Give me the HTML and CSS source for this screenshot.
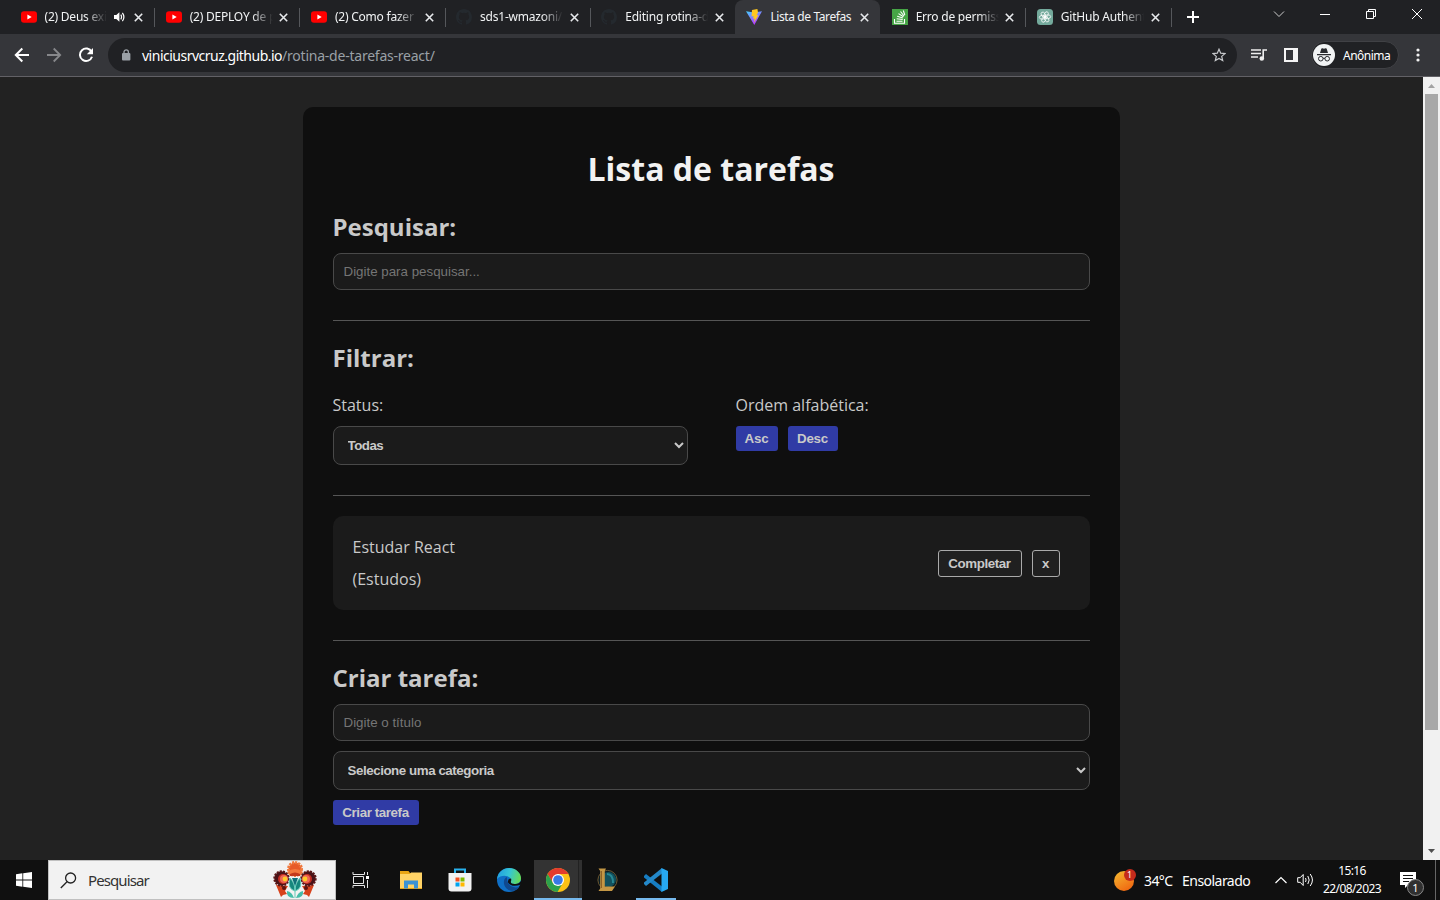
FILE: index.html
```html
<!DOCTYPE html>
<html lang="pt-BR">
<head>
<meta charset="utf-8">
<title>Lista de Tarefas</title>
<link rel="stylesheet" href="styles.css">
</head>
<body>
<svg class="defs" width="0" height="0">
  <defs>
    <symbol id="youtube" viewBox="0 0 16 16"><rect x="0" y="2.2" width="16" height="11.6" rx="3" fill="#f00"/><path d="M6.4 5.5v5l4.3-2.5z" fill="#fff"/></symbol>
    <symbol id="github" viewBox="0 0 16 16"><path fill="#24292e" d="M8 0C3.58 0 0 3.58 0 8c0 3.54 2.29 6.53 5.47 7.59.4.07.55-.17.55-.38 0-.19-.01-.82-.01-1.49-2.01.37-2.53-.49-2.69-.94-.09-.23-.48-.94-.82-1.13-.28-.15-.68-.52-.01-.53.63-.01 1.08.58 1.23.82.72 1.21 1.87.87 2.33.66.07-.52.28-.87.51-1.07-1.78-.2-3.64-.89-3.64-3.95 0-.87.31-1.59.82-2.15-.08-.2-.36-1.02.08-2.12 0 0 .67-.21 2.2.82a7.6 7.6 0 0 1 4 0c1.53-1.04 2.2-.82 2.2-.82.44 1.1.16 1.92.08 2.12.51.56.82 1.27.82 2.15 0 3.07-1.87 3.75-3.65 3.95.29.25.54.73.54 1.48 0 1.07-.01 1.93-.01 2.2 0 .21.15.46.55.38A8.01 8.01 0 0 0 16 8c0-4.42-3.58-8-8-8z"/></symbol>
    <symbol id="close" viewBox="0 0 9 9"><path d="M.8.8l7.4 7.4M8.2.8L.8 8.2" stroke="#e8eaed" stroke-width="1.6" fill="none"/></symbol>
  </defs>
</svg>

<header class="tabs">
  <div class="tab"><svg class="fav"><use href="#youtube"/></svg><span class="label short">(2) Deus exi</span>
    <svg class="sound" viewBox="0 0 11 10"><path d="M0 3h2.3L5.4.2v9.6L2.3 7H0z" fill="#fff"/><path d="M6.8 2.6q1.5 2.4 0 4.8M8.4.8q3 4.2 0 8.4" stroke="#fff" stroke-width="1.2" fill="none"/></svg>
    <svg class="x"><use href="#close"/></svg></div>
  <div class="tab"><svg class="fav"><use href="#youtube"/></svg><span class="label">(2) DEPLOY de p</span><svg class="x"><use href="#close"/></svg></div>
  <div class="tab"><svg class="fav"><use href="#youtube"/></svg><span class="label">(2) Como fazer</span><svg class="x"><use href="#close"/></svg></div>
  <div class="tab"><svg class="fav"><use href="#github"/></svg><span class="label">sds1-wmazoni/l</span><svg class="x"><use href="#close"/></svg></div>
  <div class="tab before-active"><svg class="fav"><use href="#github"/></svg><span class="label">Editing rotina-d</span><svg class="x"><use href="#close"/></svg></div>
  <div class="tab active">
    <svg class="fav" viewBox="0 0 16 16"><defs><linearGradient id="vg" x1="0" y1="0" x2=".5" y2="1"><stop offset="0" stop-color="#41d1ff"/><stop offset="1" stop-color="#bd34fe"/></linearGradient></defs><path d="M0 2.2l8 1.4 8-1.4L8.3 16z" fill="url(#vg)"/><path d="M11.4 0L6 1l-.4 6.4 2-.4-.5 2.8 1.6-.4-.7 4.2L12.6 6l-2 .3L12 3.6z" fill="#ffc820"/></svg>
    <span class="label full">Lista de Tarefas</span><svg class="x"><use href="#close"/></svg></div>
  <div class="tab"><svg class="fav" viewBox="0 0 16 16"><path fill="#46a546" d="M0 0h16v16H0z"/><path d="M2.5 10v4.3h10V10M4.5 12.2h6M4.7 9.8l6 .7M5.2 7.2l5.7 1.8M6.5 4.6l4.9 3.2M8.5 2.5l3.6 4.5M11.3 1.5l1.5 4.5" stroke="#fff" stroke-width="1.1" fill="none"/></svg><span class="label">Erro de permiss</span><svg class="x"><use href="#close"/></svg></div>
  <div class="tab"><svg class="fav" viewBox="0 0 16 16"><rect width="16" height="16" rx="3.5" fill="#74aa9c"/><g fill="none" stroke="#fff" stroke-width=".75"><ellipse cx="8" cy="5.4" rx="1.9" ry="3.1" transform="rotate(25 8 8)"/><ellipse cx="8" cy="5.4" rx="1.9" ry="3.1" transform="rotate(85 8 8)"/><ellipse cx="8" cy="5.4" rx="1.9" ry="3.1" transform="rotate(145 8 8)"/><ellipse cx="8" cy="5.4" rx="1.9" ry="3.1" transform="rotate(205 8 8)"/><ellipse cx="8" cy="5.4" rx="1.9" ry="3.1" transform="rotate(265 8 8)"/><ellipse cx="8" cy="5.4" rx="1.9" ry="3.1" transform="rotate(325 8 8)"/></g></svg><span class="label">GitHub Authent</span><svg class="x"><use href="#close"/></svg></div>
  <svg class="plus" viewBox="0 0 12 12"><path d="M6 0v12M0 6h12" stroke="#fff" stroke-width="2"/></svg>
  <div class="window-controls">
    <svg width="12" height="12" viewBox="0 0 12 12"><path d="M1 3.5l5 5 5-5" stroke="#ccc" fill="none"/></svg>
    <svg width="12" height="12" viewBox="0 0 12 12"><path d="M1 6.5h10" stroke="#fff"/></svg>
    <svg width="12" height="12" viewBox="0 0 12 12"><path d="M1.5 3.5h7v7h-7zM3.5 3.5v-2h7v7h-2" stroke="#fff" fill="none"/></svg>
    <svg width="12" height="12" viewBox="0 0 12 12"><path d="M1 1l10 10M11 1L1 11" stroke="#fff"/></svg>
  </div>
</header>

<nav class="toolbar">
  <div class="nav-icons">
    <svg width="16" height="16" viewBox="0 0 16 16"><path d="M15 8H2M8.3 1.5L1.8 8l6.5 6.5" stroke="#fff" stroke-width="2" fill="none"/></svg>
    <svg width="16" height="16" viewBox="0 0 16 16"><path d="M1 8h13M7.7 1.5L14.2 8l-6.5 6.5" stroke="#86878a" stroke-width="1.8" fill="none"/></svg>
    <svg width="16" height="16" viewBox="0 0 16 16"><path d="M13.6 4.8A6.2 6.2 0 1 0 14 9.7" stroke="#fff" stroke-width="2" fill="none"/><path d="M15 1v6.3H8.8z" fill="#fff"/></svg>
  </div>
  <div class="address">
    <svg width="10" height="12" viewBox="0 0 10 12"><rect x="1" y="4" width="8.4" height="7.6" rx="1" fill="#9aa0a6"/><path d="M3 4.5V3a2.2 2.2 0 0 1 4.4 0v1.5" stroke="#9aa0a6" stroke-width="1.3" fill="none"/></svg>
    <span class="url"><b>viniciusrvcruz.github.io</b>/rotina-de-tarefas-react/</span>
    <svg class="star" width="14" height="14" viewBox="0 0 14 14"><path d="M7 1.2l1.7 4 4.3.4-3.3 2.8 1 4.2L7 10.4l-3.7 2.2 1-4.2L1 5.6l4.3-.4z" stroke="#c7c9cc" stroke-width="1.2" fill="none"/></svg>
  </div>
  <svg class="playlist" width="16" height="14" viewBox="0 0 16 14"><path d="M0 2h10M0 5.5h10M0 9h7" stroke="#eee" stroke-width="1.6"/><path d="M12.2 10V2H16" stroke="#eee" stroke-width="1.6" fill="none"/><circle cx="10.8" cy="10.5" r="2.3" fill="#eee"/></svg>
  <svg class="panel" width="14" height="14" viewBox="0 0 14 14"><path d="M0 0h14v14H0zM2 2v10h7V2z" fill="#f5f5f5" fill-rule="evenodd"/></svg>
  <div class="profile">
    <svg width="22" height="22" viewBox="0 0 22 22"><circle cx="11" cy="11" r="11" fill="#f1f3f4"/><path d="M4 10h14v1.2H4zM7 9l1.3-4.2q.3-.8 1.2-.5l1.5.4 1.5-.4q.9-.3 1.2.5L15 9z" fill="#292b2f"/><circle cx="7.8" cy="14.7" r="2.3" stroke="#292b2f" fill="none"/><circle cx="14.2" cy="14.7" r="2.3" stroke="#292b2f" fill="none"/><path d="M10 14.5q1-.7 2 0" stroke="#292b2f" fill="none"/></svg>
    <span>Anônima</span>
  </div>
  <svg class="dots" width="4" height="14" viewBox="0 0 4 14"><g fill="#f1f1f1"><circle cx="2" cy="2" r="1.6"/><circle cx="2" cy="7" r="1.6"/><circle cx="2" cy="12" r="1.6"/></g></svg>
</nav>

<div class="viewport">
  <main class="page">
    <div class="app">
      <h1>Lista de tarefas</h1>
      <section class="search">
        <h2>Pesquisar:</h2>
        <input type="text" placeholder="Digite para pesquisar...">
      </section>
      <section class="filter">
        <h2>Filtrar:</h2>
        <div class="filter-options">
          <div class="status"><p>Status:</p><select><option>Todas</option></select></div>
          <div class="order"><p>Ordem alfabética:</p><div class="order-buttons"><button class="asc">Asc</button><button class="desc">Desc</button></div></div>
        </div>
      </section>
      <section class="todo-list">
        <div class="todo">
          <div class="todo-text"><p>Estudar React</p><p>(Estudos)</p></div>
          <div class="todo-actions"><button class="complete">Completar</button><button class="remove">x</button></div>
        </div>
      </section>
      <section class="form">
        <h2>Criar tarefa:</h2>
        <input type="text" placeholder="Digite o título">
        <select class="category"><option>Selecione uma categoria</option></select>
        <button class="create">Criar tarefa</button>
      </section>
    </div>
  </main>
  <div class="scrollbar">
    <svg width="17" height="17" viewBox="0 0 17 17"><path d="M5 11h7L8.5 7z" fill="#a3a3a3"/></svg>
    <div class="thumb"></div>
    <svg width="17" height="17" viewBox="0 0 17 17"><path d="M5 6h7l-3.5 4z" fill="#505050"/></svg>
  </div>
</div>

<footer class="taskbar">
  <div class="start"><svg width="16" height="16" viewBox="0 0 16 16"><path d="M0 2.2L6.4 1.3v6.3H0zM7.2 1.2L16 0v7.6H7.2zM0 8.4h6.4v6.3L0 13.8zM7.2 8.4H16V16l-8.8-1.2z" fill="#fff"/></svg></div>
  <div class="searchbox">
    <svg width="17" height="17" viewBox="0 0 17 17"><circle cx="10.6" cy="6" r="5" stroke="#222" stroke-width="1.3" fill="none"/><path d="M7 9.7L.8 16" stroke="#222" stroke-width="1.3"/></svg>
    <span>Pesquisar</span>
    <svg class="flower" width="44" height="38" viewBox="0 0 44 38">
      <path d="M3 24l12 1-3 5 2 3-4 1-2 2zM41 24l-12 1 3 5-2 3 4 1 2 2z" fill="#d8431c"/><circle cx="11" cy="27" r="2" fill="#5b1511"/><circle cx="33" cy="27" r="2" fill="#5b1511"/>
      <circle cx="22" cy="8" r="6.5" fill="#e75a28" stroke="#f07a3e" stroke-width="3" stroke-dasharray="2 1"/><path d="M14 11q8-6 16 0l-3 4H17z" fill="#f4793d"/><path d="M17 13q5-3 10 0v2H17z" fill="#c43a1b"/>
      <g><circle cx="8.5" cy="17.5" r="7.2" fill="#481318" stroke="#5c1818" stroke-width="2" stroke-dasharray="2 1.2"/><circle cx="10" cy="18" r="5" fill="#c52d22"/><circle cx="11" cy="18" r="4" fill="#ee6a55"/><circle cx="12" cy="18" r="2.4" fill="#ffc928"/></g>
      <g><circle cx="35.5" cy="17.5" r="7.2" fill="#481318" stroke="#5c1818" stroke-width="2" stroke-dasharray="2 1.2"/><circle cx="34" cy="18" r="5" fill="#c52d22"/><circle cx="33" cy="18" r="4" fill="#ee6a55"/><circle cx="32" cy="18" r="2.4" fill="#ffc928"/></g>
      <path d="M22 37V17M22 30Q14 28 17 17q5 5 5 13Q22 22 27 17q3 11-5 13z" fill="#17877d" stroke="#65cbb9"/><path d="M21 37q-8 0-7-7 5 1 7 7zM23 37q8 0 7-7-5 1-7 7z" fill="#45bda9"/><path d="M19 17h6l-3 8z" fill="#117078"/>
    </svg>
  </div>
  <div class="task view"><svg width="18" height="16" viewBox="0 0 18 16"><path d="M1.5 4.5h10v7h-10zM1 0v2.5h11.5V0M1 16v-2.5h11.5V16M15.5 0v3M15.5 8v8" stroke="#e6e6e6" fill="none"/><path d="M14 4h3v3h-3z" fill="#fff"/></svg></div>
  <div class="task explorer"><svg width="22" height="20" viewBox="0 0 22 20"><path d="M0 1h8.500l1.500 2H22v16H0z" fill="#e9a515"/><path d="M0 4h10l1-1.500h11V18H0z" fill="#ffd366"/><path d="M4 18.500v-8h14v8h-4v-4H8v4z" fill="#3b92d4"/></svg></div>
  <div class="task"><svg width="24" height="24" viewBox="0 0 24 24"><path d="M7 6V1.500h10V6" stroke="#28b2ee" stroke-width="2" fill="none"/><path d="M.5 5h23v15.500q0 3-3 3h-17q-3 0-3-3z" fill="#f2f2f2"/><path d="M7.500 9.500h4v4h-4z" fill="#f25022"/><path d="M12.500 9.500h4v4h-4z" fill="#7fba00"/><path d="M7.500 14.500h4v4h-4z" fill="#00a4ef"/><path d="M12.500 14.500h4v4h-4z" fill="#ffb900"/></svg></div>
  <div class="task"><svg width="24" height="24" viewBox="0 0 24 24"><defs><linearGradient id="eg" x1="0" y1=".3" x2="1" y2=".5"><stop stop-color="#219fe0"/><stop offset=".5" stop-color="#35c5d6"/><stop offset="1" stop-color="#66dc55"/></linearGradient></defs><circle cx="12" cy="12" r="12" fill="#0f6fc6"/><path d="M0 11C1 4 6 0 12 0c7 0 12 5 12 10 0 4-3 6-6.500 6-3 0-4.500-1-3.500-3 1-5-9-8-14-2z" fill="url(#eg)"/><path d="M10 9c-5 2-4 11 3 13.500 4 1 8-.5 9.500-4-5 2.500-13 0-12.500-9.500z" fill="#10498f"/><path d="M14 10.500q-3.500 0-3 4 4 5.500 13 2V13q-2 3.300-6.500 3c-3 0-4.200-1-3.500-3q.5-1.500 0-2.500z" fill="#101010"/></svg></div>
  <div class="task chrome"><svg width="24" height="24" viewBox="0 0 24 24"><circle cx="12" cy="12" r="12" fill="#fbc116"/><path d="M1.600 6A12 12 0 0 1 22.400 6H12L6.500 14.500z" fill="#e33b2e"/><path d="M1.600 6A12 12 0 0 0 11.500 24l5.300-9L12 17.500 7 15z" fill="#2da14c"/><circle cx="12" cy="12" r="6" fill="#fff"/><circle cx="12" cy="12" r="4.800" fill="#3779e6"/></svg></div>
  <div class="task"><svg width="22" height="24" viewBox="0 0 22 24"><circle cx="11.500" cy="12" r="9.600" fill="#0a1c22" stroke="#6d5832" stroke-width="1"/><circle cx="12.500" cy="11.500" r="7.500" fill="#12515d"/><path d="M11 6q6 0 6 9" stroke="#278893" stroke-width="2" fill="none"/><path d="M2.500.5H10L8.800 3v15.500H19l-3 4.500H2.500l1.700-2.500V3z" fill="#c49745"/><path d="M5.500 3v17" stroke="#8e6227" stroke-width="1"/></svg></div>
  <div class="task code"><svg width="24" height="24" viewBox="0 0 24 24"><path d="M0 8l2-2 16 12.500V24L0 9.500z" fill="#167dc2"/><path d="M0 16l2 2L18 5.500V0L0 14.500z" fill="#2489ca"/><path d="M17.500 0L24 3v18l-6.500 3z" fill="#27a9f3"/></svg></div>
  <div class="tray">
    <div class="weather"><svg width="22" height="22" viewBox="0 0 22 22"><defs><linearGradient id="sun" x2=".6" y2="1"><stop stop-color="#f5bb31"/><stop offset="1" stop-color="#f06a12"/></linearGradient></defs><circle cx="10" cy="12" r="10" fill="url(#sun)"/><circle cx="16" cy="6" r="6" fill="#c42b1c"/></svg><span class="count">1</span></div>
    <span class="temp">34°C</span><span class="sky">Ensolarado</span>
    <svg class="chev" width="12" height="8" viewBox="0 0 12 8"><path d="M.5 7L6 1.500 11.500 7" stroke="#fff" stroke-width="1.200" fill="none"/></svg>
    <svg class="vol" width="17" height="14" viewBox="0 0 17 14"><path d="M.7 4.700h2.500l3-3.200v11l-3-3.200H.7zM8.500 5q1.200 2 0 4M10.800 3q2.800 4 0 8M13.200 1q4.500 6 0 12" stroke="#fff" fill="none"/></svg>
    <div class="clock"><span>15:16</span><span>22/08/2023</span></div>
    <div class="notify"><svg width="16" height="16" viewBox="0 0 16 16"><path d="M0 0h16v13H8l-3 3v-3H0z" fill="#fff"/><path d="M3 3.500h10M3 6.500h10M3 9.500h6" stroke="#111"/></svg><span class="badge">1</span></div>
    <div class="peek"></div>
  </div>
</footer>
</body>
</html>
```

FILE: styles.css
```css
* { box-sizing: border-box; margin: 0; padding: 0; }
body { width: 1440px; height: 900px; overflow: hidden; display: flex; flex-direction: column; background: #222; font-family: "Open Sans", sans-serif; }
svg { display: block; flex: none; }
.defs { position: absolute; }

/* tab strip */
.tabs { height: 34px; flex: none; background: #202124; display: flex; align-items: stretch; padding-left: 9px; color: #f1f3f4; font: 12px "Noto Sans", sans-serif; letter-spacing: -.22px; }
.tab { position: relative; width: 145.2px; flex: none; display: flex; align-items: center; padding: 0 12px 0 11.500px; }
.tab::after { content: ""; position: absolute; right: -1px; top: 8px; width: 1px; height: 19px; background: #55575b; }
.tab.active::after, .tab.before-active::after { display: none; }
.fav { width: 16px; height: 16px; }
.label { width: 92px; margin: 0 -7px 0 8px; white-space: nowrap; line-height: 18px; -webkit-mask-image: linear-gradient(90deg, #000 62px, transparent 83px); mask-image: linear-gradient(90deg, #000 62px, transparent 83px); }
.label.short { width: 72px; margin-right: -10px; -webkit-mask-image: linear-gradient(90deg, #000 40px, transparent 62px); mask-image: linear-gradient(90deg, #000 40px, transparent 62px); }
.label.full { letter-spacing: -.4px; -webkit-mask-image: none; mask-image: none; }
.sound { width: 11px; height: 10px; margin-left: 7px; }
.x { width: 9px; height: 9px; margin-left: auto; margin-right: -1px; }
.active { background: #35363a; border-radius: 8px 8px 0 0; }
.plus { width: 12px; height: 12px; align-self: center; margin-left: 16px; }
.window-controls { margin-left: auto; display: flex; gap: 34px; padding: 8px 17px 0 0; }

/* toolbar */
.toolbar { height: 43px; flex: none; background: #35363a; border-bottom: 1px solid #626166; display: flex; align-items: center; color: #fff; }
.nav-icons { display: flex; gap: 16px; margin-left: 14px; }
.address { width: 1129px; height: 34px; margin-left: 14px; border-radius: 17px; background: #202124; display: flex; align-items: center; padding: 0 11px 0 13px; }
.url { margin-left: 11px; font: 14px "Noto Sans", sans-serif; color: #9aa0a6; letter-spacing: -.23px; }
.url b { font-weight: 400; color: #fff; letter-spacing: -.5px; }
.star { margin-left: auto; }
.playlist { margin-left: 14px; }
.panel { margin-left: 17px; }
.profile { width: 88px; height: 28px; margin-left: 13px; border: 1px solid #404145; border-radius: 14px; background: #202124; display: flex; align-items: center; padding-left: 1px; gap: 8px; font: 12px "Noto Sans", sans-serif; letter-spacing: -.45px; }
.profile span { letter-spacing: -.5px; }
.dots { margin-left: 17px; }

/* page */
.viewport { height: 783px; flex: none; display: flex; overflow: hidden; }
.page { width: 1423px; height: 783px; overflow: hidden; background: #222; }
.app { width: 817px; height: 850px; margin: 30px 0 0 302.500px; padding: 30px; border-radius: 10px; background: #0f0f0f; color: #c9c9c9; }
h1 { margin: 10px 0 19px; font-size: 32px; line-height: 44px; text-align: center; color: #f2f2f2; }
h2 { font-size: 24px; line-height: 33px; color: #c9c9c9; }
.app p { font-size: 16px; line-height: 22px; }
.app input { display: block; width: 100%; height: 37px; padding: 0 10px; border: 1px solid #494949; border-radius: 8px; background: #1b1b1b; color: #c9c9c9; font: 13.333px "Liberation Sans", Arial, sans-serif; }
.app input::placeholder { color: #757575; }
.app select { display: block; width: 100%; height: 39px; padding: 10px; border: 1px solid #494949; border-radius: 8px; background: #1b1b1b; color: #c9c9c9; font: bold 13.333px "Liberation Sans", Arial, sans-serif; letter-spacing: -.5px; }
.app .category { letter-spacing: -.44px; }
.app button { height: 25px; border: 0; border-radius: 3px; background: #303ba5; color: #c9c9c9; font: bold 13.333px "Liberation Sans", Arial, sans-serif; letter-spacing: -.4px; }
.search { padding-bottom: 30px; border-bottom: 1px solid #555; }
.search h2 { margin-bottom: 10px; }
.form h2 { margin-bottom: 10px; }
.filter { padding: 20px 0 30px; border-bottom: 1px solid #555; }
.filter-options { display: flex; gap: 48px; margin-top: 20px; }
.status { width: 355px; }
.filter-options p { margin-bottom: 10px; }
.order-buttons { display: flex; gap: 10px; }
.app .asc { width: 42px; letter-spacing: -.2px; }
.app .desc { width: 50px; letter-spacing: -.2px; }
.todo-list { padding: 20px 0 30px; border-bottom: 1px solid #555; }
.todo { display: flex; justify-content: space-between; align-items: center; height: 94px; padding: 20px 30px 20px 20px; border-radius: 10px; background: #1b1b1b; }
.todo-text { display: flex; flex-direction: column; gap: 10px; }
.todo-actions { display: flex; gap: 10px; }
.todo .todo-actions button { height: 27px; border: 1px solid #aaa; background: #202020; }
.complete { width: 84px; }
.remove { width: 28px; }
.form { padding-top: 20px; }
.form select { margin: 10px 0; }
.form .create { width: 86px; }

.scrollbar { width: 17px; background: #f1f1f1; display: flex; flex-direction: column; }
.thumb { width: 13px; height: 636px; margin: 0 2px auto; background: #a8a8a8; }

/* taskbar */
.taskbar { height: 40px; flex: none; background: #101010; display: flex; color: #fff; font-family: "Noto Sans", sans-serif; }
.start { width: 48px; display: flex; align-items: center; justify-content: center; }
.searchbox { width: 288px; background: #f2f2f2; border: 1px solid #c0c0c0; display: flex; align-items: center; padding: 0 18px 0 11px; }
.searchbox span { margin-left: 11px; font-size: 15px; letter-spacing: -.9px; color: #333; }
.flower { margin-left: auto; }
.task { width: 49.300px; display: flex; align-items: center; justify-content: center; }
.view { width: 50px; padding-right: 1px; }
.explorer { padding-left: 1px; }
.chrome { width: 48px; background: linear-gradient(90deg, #333 44px, #222 44px, #222 45px, #303030 45px); border-bottom: 2px solid #76b9ed; padding-top: 2px; }
.code { width: 40px; border-bottom: 2px solid #76b9ed; padding-top: 2px; margin-left: 5px; }
.tray { margin-left: auto; display: flex; align-items: center; height: 40px; }
.weather { position: relative; width: 22px; }
.count { position: absolute; left: 13px; top: -1px; font-size: 9px; line-height: 14px; }
.temp, .sky { font-size: 14px; white-space: nowrap; }
.temp { width: 31px; margin-left: 8px; letter-spacing: -.6px; }
.sky { width: 69px; margin-left: 7px; letter-spacing: -.53px; }
.chev { margin-left: 24px; }
.vol { margin-left: 10px; }
.clock { width: 60px; margin-left: 8px; display: flex; flex-direction: column; align-items: center; font-size: 12px; line-height: 18px; letter-spacing: -.6px; white-space: nowrap; }
.notify { position: relative; width: 24px; height: 16px; margin-left: 18px; }
.badge { position: absolute; left: 7px; top: 7px; width: 17px; height: 17px; border: 1px solid #888; border-radius: 50%; background: #303030; font-size: 11px; line-height: 15px; text-align: center; }
.peek { width: 1px; height: 40px; margin: 0 4px 0 11px; background: #666; }
```
